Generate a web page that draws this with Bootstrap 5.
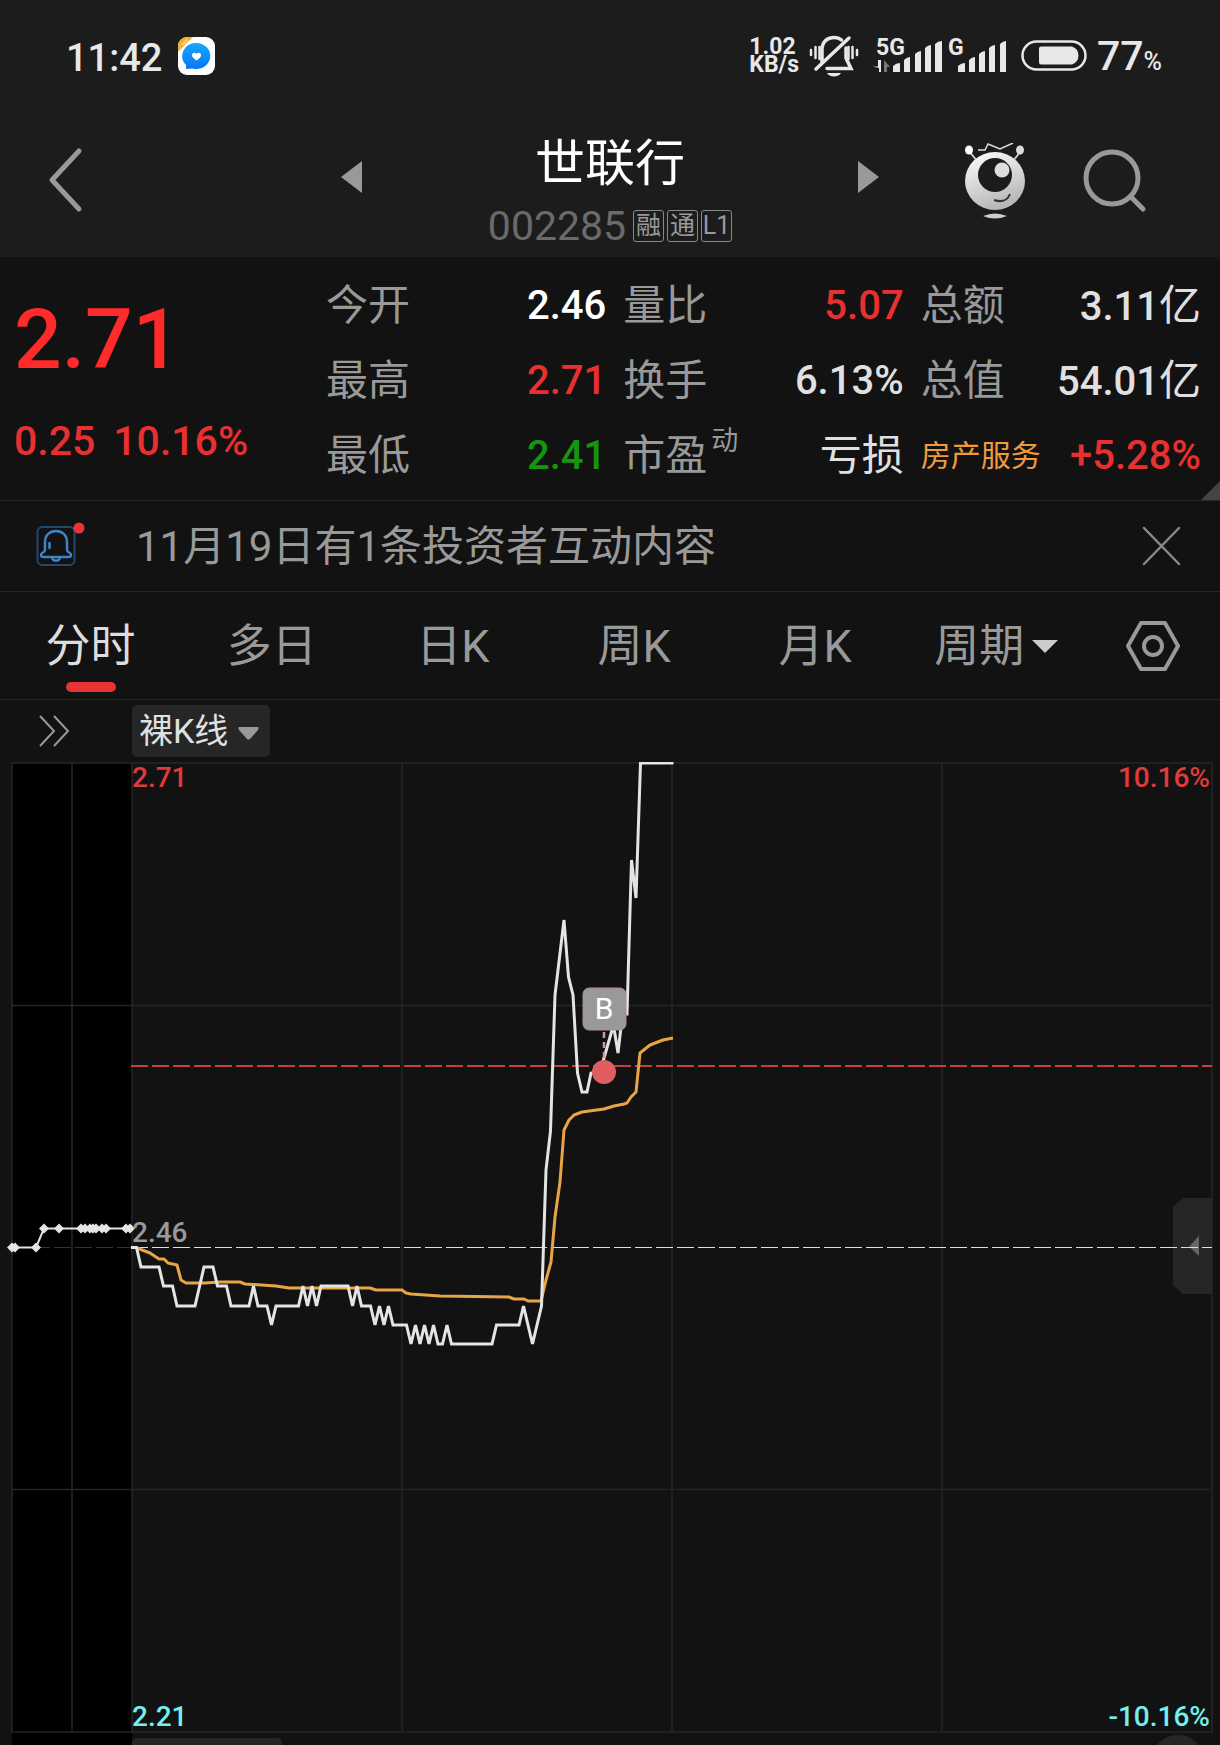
<!DOCTYPE html>
<html lang="zh-CN" data-bs-theme="dark">
<head>
<meta charset="utf-8">
<meta name="viewport" content="width=device-width, initial-scale=1">
<title>世联行 002285</title>
<link href="https://cdn.jsdelivr.net/npm/bootstrap@5.3.0/dist/css/bootstrap.min.css" rel="stylesheet">
<style>
  :root { --up: #e93030; --down: #14960f; --dim: #999; --line: #262626; }
  body { background: #121212; color: #e0e0e0; font-family: Roboto, "Noto Sans CJK SC", sans-serif; overflow-x: hidden; }
  svg { display: block; flex: none; }
  .topbar { background: #1c1c1c; }
  .plain { background: none; border: 0; padding: 0; color: inherit; line-height: 1; }
  .status { height: 112px; padding: 0 58px 0 66px; color: #e8e8e8; }
  .status .icons { gap: 10px; }
  .clock { font-size: 38px; font-weight: 500; line-height: 40px; }
  .netspeed { font-size: 23px; font-weight: 700; line-height: 18px; }
  .netspeed span { display: block; }
  .battery { font-size: 41px; font-weight: 500; line-height: 40px; padding-top: 5px; }
  .battery-unit { font-size: 25px; font-weight: 500; }
  .titlebar { height: 145px; }
  .titlebar .side { flex: 0 0 340px; height: 138px; }
  .titlebar .side-start { padding-left: 46px; }
  .titlebar .side-end { padding-right: 72px; gap: 56px; }
  .stock-name { font-size: 50px; line-height: 56px; font-weight: 400; color: #fff; margin: 0; }
  .stock-sub { gap: 3px; margin-top: 18px; }
  .stock-code { font-size: 41px; line-height: 32px; color: #6a6a6a; }
  .tagbox { border: 1px solid #888; border-radius: 3px; width: 31px; height: 32px; font-size: 25px; line-height: 29px; text-align: center; color: #999; }
  .quote { height: 244px; border-bottom: 1px solid var(--line); padding: 11px 19px 7px 14px; position: relative; }
  .price-block { flex: 0 0 312px; color: var(--up); }
  .price { font-size: 84px; line-height: 84px; font-weight: 500; color: #ff2b2b; padding-top: 30px; }
  .change { font-size: 41px; line-height: 44px; font-weight: 500; margin-top: 37px; gap: 18px; }
  .stats { column-gap: 17px; }
  .stats dl { flex: 1 1 0; margin: 0; }
  .stat { height: 75px; font-size: 40px; }
  .stat dt { font-weight: 400; font-size: 42px; color: var(--dim); }
  .stat dd { margin: 0; color: #e0e0e0; font-weight: 500; }
  .stat .cjk { font-size: 42px; font-weight: 400; }
  .stat sup { font-size: 27px; top: -20px; margin-left: 4px; }
  .stat .sector { font-size: 30px; color: #f09a3e; text-decoration: none; }
  .stat .c-up { color: var(--up); } .stat .c-down { color: var(--down); } .stat .c-open { color: #fff; }
  .corner { position: absolute; right: 0; bottom: 0; }
  .notice { height: 91px; border-bottom: 1px solid var(--line); padding: 0 39px 0 36px; color: var(--dim); }
  .notice-text { font-size: 42px; margin-left: 50px; }
  .periods { height: 108px; border-bottom: 1px solid var(--line); }
  .periods .tab { flex: 0 0 14.85%; font-size: 45px; color: var(--dim); position: relative; height: 107px; padding-top: 2px; }
  .periods .tab svg { margin-left: 8px; }
  .periods .tab.on { color: #ddd; }
  .periods .tab.on::after { content: ""; position: absolute; left: 50%; bottom: 7px; width: 50px; height: 10px; margin-left: -25px; border-radius: 5px; background: #e63434; }
  .tools { height: 62px; padding-left: 38px; }
  .picker { margin-left: 62px; position: relative; }
  .picker select { appearance: none; background: #262626; color: #e0e0e0; border: 0; border-radius: 5px; width: 138px; height: 52px; font-size: 34px; line-height: 50px; padding: 0 0 0 7px; }
  .picker svg { position: absolute; right: 11px; top: 22px; pointer-events: none; }
  .chart { width: 100%; height: auto; font-family: Roboto, "Noto Sans CJK SC", sans-serif; font-size: 28px; }
  .nextpane { height: 12px; overflow: hidden; padding: 0 15px 0 12px; }
  .preblock { width: 120px; height: 12px; background: #000; }
  .peek-btn { width: 150px; height: 48px; margin-top: 5px; border-radius: 5px; background: #262626; border: 0; }
  .peek-round { width: 54px; height: 54px; margin-top: 2px; background: #262626; border: 0; }
</style>
</head>
<body>
<header class="topbar">
  <div class="status d-flex align-items-center">
    <span class="clock mt-1">11:42</span>
    <svg class="ms-3" width="37" height="38" viewBox="0 0 37 38" aria-hidden="true">
      <defs><linearGradient id="bub" x1="0" y1="0" x2="0" y2="1"><stop offset="0" stop-color="#12a8ff"/><stop offset="1" stop-color="#0a78f5"/></linearGradient>
      <clipPath id="app"><rect width="37" height="38" rx="9"/></clipPath></defs>
      <g clip-path="url(#app)"><rect width="37" height="38" fill="#fff"/><path d="M0 0H15L0 15Z" fill="#eeb23c"/><path d="M3 8l6-6M5 8l5-5" stroke="#fbe3ae"/></g>
      <path d="M18.500 6a14 13 0 1 1-4 25.500L8 32V28A13.500 13 0 0 1 18.500 6Z" fill="url(#bub)"/>
      <path d="M18.500 23.500c-3-2-4.500-3.500-4.500-5.500 0-2.500 3.500-3 4.500-.8 1-2.200 4.500-1.700 4.500.8 0 2-1.500 3.500-4.500 5.500Z" fill="#fff"/>
    </svg>
    <div class="icons ms-auto d-flex align-items-center">
      <div class="netspeed"><span>1.02</span><span>KB/s</span></div>
      <svg width="50" height="42" viewBox="0 0 50 42" fill="none" stroke="#e8e8e8" stroke-width="3.500" stroke-linecap="round" aria-hidden="true">
        <path d="M2 15v5M6.500 12v11M10.500 12v12M39.500 12v12M43.500 12v11M48 15v5" stroke-width="2.500"/>
        <path d="M13 27V15c0-8 5-12.500 12-12.500 3 0 5.500.8 7.500 2.500M37 13v10l5 10.500H18"/>
        <path d="M40 3 7 34"/><path d="M18 38h14c-2 4.500-12 4.500-14 0Z" fill="#e8e8e8" stroke="none"/>
      </svg>
      <svg class="ms-1" width="138" height="48" viewBox="0 -6 138 48" fill="#e8e8e8" aria-label="5G G">
        <text x="3" y="17" font-size="23" font-weight="700">5G</text>
        <path d="M5 22h3v12H6V30L0 28.500h5Z"/><path d="M11 34V22l6 7h-3v5Z" fill="#777"/>
        <path d="M20 28q3-3 7-3v9H20ZM31 22q3-3 6-3v15H31ZM42 16q3-3 6-3v21H42ZM52 10q3-3 6-3v27H52ZM62 6q3-3 7-3v31H62Z"/>
        <text x="75" y="17" font-size="23" font-weight="700">G</text>
        <path d="M85 28q3-3 7-3v9H85ZM96 22q3-3 6-3v15H96ZM106 16q3-3 6-3v21H106ZM116 10q3-3 6-3v27H116ZM127 6q3-3 6-3v31H127Z"/>
      </svg>
      <svg width="66" height="32" viewBox="0 0 66 32" aria-hidden="true"><rect x="1.500" y="1.500" width="63" height="28" rx="14" fill="none" stroke="#e8e8e8" stroke-width="2.500"/><path d="M20 6.500H51a9.500 9.500 0 0 1 0 18H20q-2 0-2-2V8.500q0-2 2-2Z" fill="#e8e8e8"/></svg>
      <span class="battery">77<span class="battery-unit">%</span></span>
    </div>
  </div>
  <div class="titlebar d-flex align-items-start">
    <div class="side side-start d-flex align-items-center">
      <button class="plain" aria-label="返回"><svg width="40" height="74" viewBox="0 0 40 74" fill="none" stroke="#999" stroke-width="5" stroke-linecap="round" stroke-linejoin="round"><path d="M33 7 6 36 33 65" /></svg></button>
    </div>
    <div class="flex-grow-1 d-flex align-items-center justify-content-between">
      <button class="plain" aria-label="上一只"><svg width="22" height="32" viewBox="0 0 22 32"><path d="M1 16 22 0V32Z" fill="#999"/></svg></button>
      <div class="d-flex flex-column align-items-center mt-4">
        <h1 class="stock-name">世联行</h1>
        <div class="stock-sub d-flex align-items-center">
          <span class="stock-code me-1">002285</span><span class="tagbox">融</span><span class="tagbox">通</span><span class="tagbox">L1</span>
        </div>
      </div>
      <button class="plain" aria-label="下一只"><svg width="22" height="32" viewBox="0 0 22 32"><path d="M21 16 0 0V32Z" fill="#999"/></svg></button>
    </div>
    <div class="side side-end d-flex align-items-center justify-content-end">
      <button class="plain" aria-label="智能助手"><svg width="62" height="76" viewBox="0 0 62 76">
        <defs><linearGradient id="bot" x1="0" y1="0" x2=".4" y2="1"><stop offset="0" stop-color="#fff"/><stop offset="1" stop-color="#b8b8b8"/></linearGradient></defs>
        <path d="M5 8l8 10M57 8l-8 10" stroke="#ccc" stroke-width="2"/><ellipse cx="5" cy="7" rx="4" ry="4.500" fill="#fff"/><ellipse cx="56" cy="7" rx="4" ry="4.500" fill="#ddd"/>
        <path d="M14 7h7l3-6 12 5L49 0" fill="none" stroke="#ddd" stroke-width="1.500"/>
        <ellipse cx="31" cy="38" rx="30" ry="29" fill="url(#bot)"/><circle cx="31" cy="32" r="17" fill="#1c1c1c"/><circle cx="38" cy="27" r="7.500" fill="#ddd"/>
        <path d="M30 57q12 4 16-6" fill="none" stroke="#333" stroke-width="2"/><path d="M19 73q12-5 24 0-12 5-24 0Z" fill="#ccc"/></svg></button>
      <button class="plain" aria-label="搜索"><svg width="66" height="66" viewBox="0 0 66 66" fill="none" stroke="#999" stroke-width="5" stroke-linecap="round"><circle cx="30" cy="30" r="26"/><path d="M49 49 61 61"/></svg></button>
    </div>
  </div>
</header>

<main>
  <section class="quote d-flex">
    <div class="price-block">
      <div class="price">2.71</div>
      <div class="change d-flex"><span>0.25</span><span>10.16%</span></div>
    </div>
    <div class="stats d-flex flex-grow-1">
      <dl>
        <div class="stat d-flex align-items-center justify-content-between"><dt>今开</dt><dd class="c-open">2.46</dd></div>
        <div class="stat d-flex align-items-center justify-content-between"><dt>最高</dt><dd class="c-up">2.71</dd></div>
        <div class="stat d-flex align-items-center justify-content-between"><dt>最低</dt><dd class="c-down">2.41</dd></div>
      </dl>
      <dl>
        <div class="stat d-flex align-items-center justify-content-between"><dt>量比</dt><dd class="c-up">5.07</dd></div>
        <div class="stat d-flex align-items-center justify-content-between"><dt>换手</dt><dd>6.13%</dd></div>
        <div class="stat d-flex align-items-center justify-content-between"><dt>市盈<sup>动</sup></dt><dd class="cjk">亏损</dd></div>
      </dl>
      <dl>
        <div class="stat d-flex align-items-center justify-content-between"><dt>总额</dt><dd>3.11<span class="cjk">亿</span></dd></div>
        <div class="stat d-flex align-items-center justify-content-between"><dt>总值</dt><dd>54.01<span class="cjk">亿</span></dd></div>
        <div class="stat d-flex align-items-center justify-content-between"><dt class="d-flex"><a class="sector" href="#">房产服务</a></dt><dd class="c-up">+5.28%</dd></div>
      </dl>
    </div>
    <svg class="corner" width="19" height="19" viewBox="0 0 19 19" aria-hidden="true"><path d="M19 0V19H0Z" fill="#444"/></svg>
  </section>

  <section class="notice d-flex align-items-center">
    <svg width="50" height="50" viewBox="0 0 50 50" fill="none" aria-hidden="true">
      <rect x="1.500" y="6" width="37" height="38" rx="5" stroke="#23486e" stroke-width="2"/>
      <path d="M9 29V21c0-7 5-11 11-11s11 4 11 11v8c0 3 4 2 4 5 0 2-1 2-3 2H8c-2 0-3 0-3-2 0-3 4-2 4-5ZM16 36c0 5 8 5 8 0M13.500 22v5" stroke="#3a86c8" stroke-width="2.500" stroke-linecap="round"/>
      <circle cx="43" cy="7" r="5.500" fill="#e93535"/></svg>
    <span class="notice-text">11月19日有1条投资者互动内容</span>
    <button class="plain ms-auto" aria-label="关闭"><svg width="39" height="40" viewBox="0 0 39 40" stroke="#888" stroke-width="2.500" stroke-linecap="round"><path d="M2 2 37 38M37 2 2 38"/></svg></button>
  </section>

  <nav class="periods d-flex align-items-center">
    <button class="plain tab on">分时</button>
    <button class="plain tab">多日</button>
    <button class="plain tab">日K</button>
    <button class="plain tab">周K</button>
    <button class="plain tab">月K</button>
    <button class="plain tab d-flex align-items-center justify-content-center">周期<svg width="26" height="13" viewBox="0 0 26 13"><path d="M0 0H26L13 13Z" fill="#ccc"/></svg></button>
    <button class="plain flex-grow-1 d-flex justify-content-center" aria-label="设置"><svg width="54" height="50" viewBox="0 0 54 50" fill="none" stroke="#999" stroke-width="4" stroke-linejoin="round"><path d="M15 2H39L52 25 39 48H15L2 25Z"/><circle cx="27" cy="25" r="9"/></svg></button>
  </nav>

  <div class="tools d-flex align-items-center">
    <button class="plain" aria-label="展开"><svg width="32" height="32" viewBox="0 0 32 32" fill="none" stroke="#999" stroke-width="2"><path d="M2 1 16 16 2 31M16 1 30 16 16 31"/></svg></button>
    <div class="picker"><select aria-label="主图类型"><option>裸K线</option></select><svg width="21" height="13" viewBox="0 0 21 13"><path d="M1 0H20Q21 1 20 3L12 12Q10.500 13 9 12L1 3Q0 1 1 0Z" fill="#999"/></svg></div>
  </div>

  <svg class="chart" viewBox="0 762 1220 971" role="img" aria-label="分时走势">
    <rect x="12" y="763" width="120" height="970" fill="#000"/>
    <g fill="none" stroke="#262626" stroke-width="1.500">
      <rect x="12" y="763" width="1200" height="969"/>
      <path d="M72 763V1732M132 763V1732M402 763V1732M672 763V1732M942 763V1732M12 1005.500H1212M12 1489.500H1212"/>
    </g>
    <path d="M1212 1198H1183L1173 1207V1285L1183 1294H1212Z" fill="#262626"/>
    <path d="M1189 1246.500 1199 1236V1256Z" fill="#666"/>
    <path d="M12 1247.500H131" stroke="#333" stroke-dasharray="17 4"/>
    <path d="M131 1247.500H1212" stroke="#ddd" stroke-dasharray="17 4"/>
    <path d="M131 1066H1212" stroke="#c8403e" stroke-width="2" stroke-dasharray="17 4"/>
    <polyline fill="none" stroke="#e8a545" stroke-width="3" stroke-linejoin="round" points="137,1248 150,1253 159,1259 164,1259 168,1263 177,1265 181,1280 186,1283 205,1283 220,1282 240,1282 245,1284 276,1286 289,1288 370,1288 376,1290 402,1290 406,1293 411,1294 440,1296 509,1297 514,1299 524,1299 528,1301 541,1301 546,1280 551,1262 555,1217 560,1182 564,1130 569,1120 574,1115 582,1112 604,1109 614,1106 624,1104 627,1103 631,1097 636,1092 640,1053 650,1045 663,1040 673,1038"/>
    <polyline fill="none" stroke="#e4e4e4" stroke-width="3" points="131,1247.500 136.500,1247.500 141,1267 159,1267 163.500,1286 172.500,1286 177,1306 195,1306 204,1267 213,1267 217.500,1286 226.500,1286 231,1306 249,1306 253.500,1286 258,1306 267,1306 271.500,1325 276,1306 298.500,1306 303,1286 307.500,1306 312,1286 316.500,1306 321,1286 348,1286 352.500,1306 357,1286 361.500,1306 370.500,1306 375,1325 379.500,1306 384,1325 388.500,1306 393,1325 406.500,1325 411,1344 415.500,1325 420,1344 424.500,1325 429,1344 433.500,1325 438,1344 442.500,1344 447,1325 451.500,1344 492,1344 496.500,1325 519,1325 523.500,1306 532.500,1344 541.500,1306 546,1170 550.500,1131 555,995 564,920 568.500,977 573,995 577.500,1073 582,1092 587,1092 591,1073 600,1072 604,1058 613.500,1025 618,1053 622.500,1014 627,1014 631.500,860 636,898 640.500,763 673.500,763"/>
    <polyline fill="none" stroke="#e4e4e4" stroke-width="2" points="12,1247.500 36,1247.500 44,1228.500 131,1228.500"/>
    <path fill="#e4e4e4" d="M7 1247.500l5-5 5 5-5 5ZM10 1247.500l5-5 5 5-5 5ZM31 1247.500l5-5 5 5-5 5ZM39 1228.500l5-5 5 5-5 5ZM54 1228.500l5-5 5 5-5 5ZM76 1228.500l5-5 5 5-5 5ZM80 1228.500l5-5 5 5-5 5ZM85 1228.500l5-5 5 5-5 5ZM88 1228.500l5-5 5 5-5 5ZM91 1228.500l5-5 5 5-5 5ZM97 1228.500l5-5 5 5-5 5ZM101 1228.500l5-5 5 5-5 5ZM121 1228.500l5-5 5 5-5 5ZM125 1228.500l5-5 5 5-5 5Z"/>
    <path d="M604 1032V1062" stroke="#c99" stroke-width="2.500" stroke-dasharray="6 4"/>
    <circle cx="604" cy="1072" r="12" fill="#dc6062"/><circle cx="604" cy="1072" r="6" fill="#e65a5e"/>
    <rect x="583" y="988" width="43" height="42" rx="6" fill="#999" stroke="#b08a8a" stroke-width="1"/>
    <text x="604" y="1019" text-anchor="middle" fill="#fff" font-size="30">B</text>
    <g font-weight="500">
      <text x="132" y="787" fill="#e03a3a">2.71</text>
      <text x="1210" y="787" fill="#e03a3a" text-anchor="end">10.16%</text>
      <text x="132" y="1242" fill="#999">2.46</text>
      <text x="132" y="1726" fill="#72f0ee">2.21</text>
      <text x="1210" y="1726" fill="#72f0ee" text-anchor="end">-10.16%</text>
    </g>
  </svg>
  <div class="nextpane d-flex">
    <div class="preblock"></div><button class="peek-btn" aria-label="副图指标"></button>
    <button class="peek-round rounded-circle ms-auto" aria-label="更多"></button>
  </div>
</main>
<script src="https://cdn.jsdelivr.net/npm/bootstrap@5.3.0/dist/js/bootstrap.bundle.min.js"></script>
</body>
</html>
